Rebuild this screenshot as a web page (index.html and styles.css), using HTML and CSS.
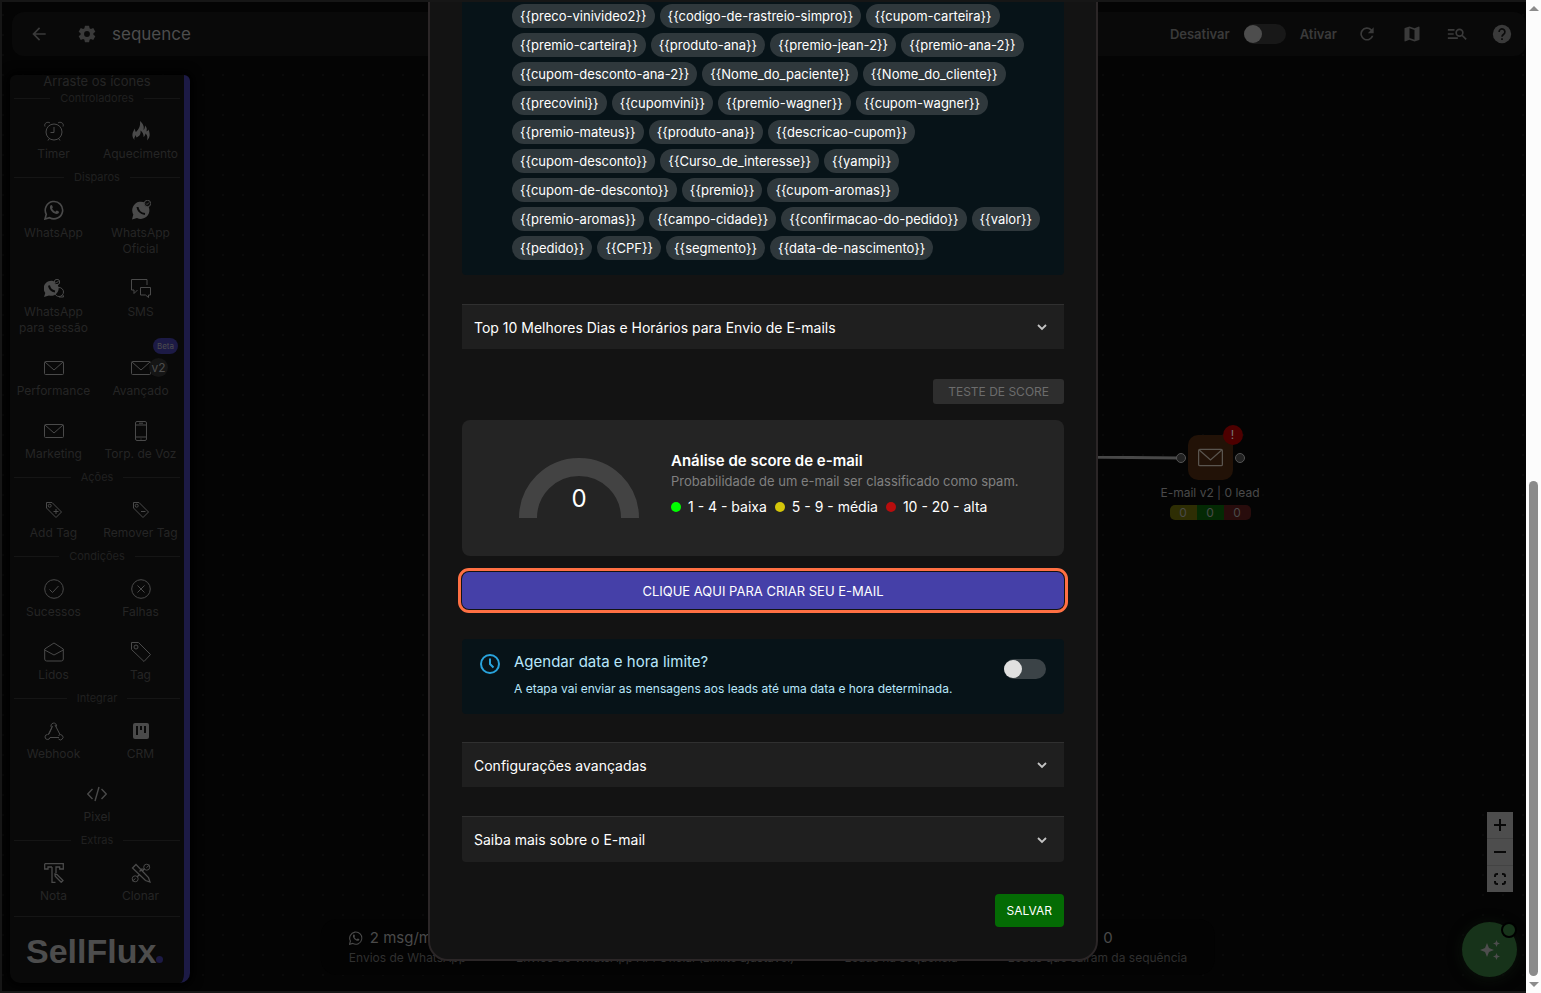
FILE: index.html
```html
<!DOCTYPE html>
<html lang="pt-BR">

<head>
    <meta charset="UTF-8">
    <meta name="viewport" content="width=device-width, initial-scale=1.0">
    <title>sequence - SellFlux</title>
    <link rel="stylesheet" href="styles.css">
</head>

<body>
    <svg class="sprite" aria-hidden="true">
        <symbol id="mail" viewBox="0 0 20 20"><rect x="0.5" y="3.5" width="19" height="13" rx="1"/><path d="M1 4l9 8 9-8"/></symbol>
        <symbol id="whats" viewBox="0 0 20 20"><path d="M1 19l1.300-4.700A8.700 8.700 0 1 1 5.600 17.700z" stroke-width="1.600"/><path d="M6.400 5.500c.6-.8 1.400-.7 1.700 0l.7 1.600c.2.500-.8 1.300-.6 1.700.8 1.500 1.800 2.300 3.200 2.900.5.100 1-1.300 1.500-1.100l1.800.9c.6.400.2 1.500-.5 2-1.600 1.200-4.400-.1-6.100-1.800C6.300 9.800 5.200 7.400 6.400 5.500z" class="fill"/></symbol>
        <symbol id="chevron" viewBox="0 0 12 12"><path d="M2 4l4 4 4-4" stroke-width="1.800"/></symbol>
    </svg>

    <div class="page">
        <main class="workspace">
            <header class="topbar">
                <button class="icon-btn" aria-label="Voltar"><svg viewBox="0 0 24 24"><path class="fill" d="M20 11H7.800l5.600-5.600L12 4l-8 8 8 8 1.400-1.400L7.800 13H20z"/></svg></button>
                <button class="icon-btn gear" aria-label="Configurações"><svg viewBox="0 0 24 24"><path class="fill" fill-rule="evenodd" d="M9.500 2h5l.6 3 1.500.9 2.900-1 2.500 4.300-2.300 2v1.600l2.300 2-2.500 4.300-2.900-1-1.500.9-.6 3h-5l-.6-3-1.500-.9-2.900 1L2 14.800l2.300-2v-1.600L2 9.200l2.500-4.300 2.900 1L8.900 5zM12 8.500a3.500 3.500 0 1 0 0 7 3.500 3.500 0 0 0 0-7z"/></svg></button>
                <h1>sequence</h1>
                <div class="topbar-right">
                    <label for="active">Desativar</label>
                    <input type="checkbox" class="switch" id="active">
                    <label for="active">Ativar</label>
                    <button class="icon-btn" aria-label="Atualizar"><svg viewBox="0 0 24 24"><path class="fill" d="M17.700 6.300A8 8 0 1 0 19.700 14h-2.100A6 6 0 1 1 16.200 7.800L13 11h7V4z"/></svg></button>
                    <button class="icon-btn" aria-label="Mapa"><svg viewBox="0 0 24 24"><path class="fill" fill-rule="evenodd" d="M20.500 3l-.2.100L15 5.100 9 3 3.400 4.900a.5.500 0 0 0-.4.500v15.100c0 .3.200.5.500.5l5.500-2.100 6 2.100 5.600-1.900c.2-.1.400-.3.400-.5V3.500a.5.500 0 0 0-.5-.5zM15 19l-6-2.100V5l6 2.100z"/></svg></button>
                    <button class="icon-btn" aria-label="Buscar"><svg viewBox="0 0 24 24"><path class="fill" d="M1 6h8v2H1zm0 5h7v2H1zm0 5h12v2H1z"/><circle cx="15" cy="10.500" r="4" stroke-width="2"/><path d="M18 13.500l5 5" stroke-width="2"/></svg></button>
                    <button class="icon-btn" aria-label="Ajuda"><svg viewBox="0 0 24 24"><circle cx="12" cy="12" r="11" class="fill"/><path class="dark" d="M8.500 9.500a3.500 3.500 0 1 1 5.500 2.800c-1.300.9-2 1.500-2 3M12 17v2.200"/></svg></button>
                </div>
            </header>

            <aside class="sidebar">
                <div class="sidebar-list">
                    <p class="hint">Arraste os ícones</p>
                    <h2 class="group">Controladores</h2>
                    <div class="tools">
                        <div class="tool"><svg viewBox="0 0 20 20"><circle cx="10" cy="11" r="8"/><path d="M10 6v5.500H6.500M1 5.500C-.5 2 4 .2 6 2M19 5.500C20.500 2 16 .2 14 2M5 18l-1 1.500M15 18l1 1.500"/></svg>Timer</div>
                        <div class="tool"><svg viewBox="0 0 20 20"><path class="fill" d="M3.500 19C0 15 1.500 11 4 7.500c0 2 .3 3 1 3.500C8 8 9.500 5 9 0c3 3 4.500 5 3.500 9 1-1 1.500-2.500 1.500-4.500 2 2 2 3.500 1.500 6 1-.5 1.500-1 2-2 2 5 1.500 8-1.500 11 1-4 0-5.500-1.500-7-.3 2-1 3-2 3.500.3-3-1-5-3-6.500.5 4-1 5.500-4 7-.5-1-.7-1.500-.7-2.500-1.300 2-1.800 3.500-1.300 5z"/></svg>Aquecimento</div>
                    </div>
                    <h2 class="group">Disparos</h2>
                    <div class="tools">
                        <div class="tool"><svg><use href="#whats"/></svg>WhatsApp</div>
                        <div class="tool"><svg viewBox="0 0 20 20"><path class="fill" d="M1 19.500l1.300-5A8.600 8.600 0 1 1 6 18z"/><path class="dark" d="M6.500 7c.5 4 3 6.500 7.500 7"/><circle cx="16.500" cy="3.500" r="3.200" class="badge-dot"/><path d="M15 3.500l1 1L18 2.500"/></svg>WhatsApp Oficial</div>
                        <div class="tool"><svg viewBox="0 0 20 20"><circle cx="15" cy="13" r="4.500"/><path class="fill" d="M0 18l1.300-4A7.500 7.500 0 1 1 5 16.500z"/><path class="dark" d="M5 6.500c.5 3.500 2.500 5.500 6 6"/><circle cx="13" cy="3" r="2.700" class="badge-dot"/><path d="M11.500 3l1 1 2-2M15 18h4.500l-.5-2"/></svg>WhatsApp para sessão</div>
                        <div class="tool"><svg viewBox="0 0 20 20"><path d="M16 6V.5H.5V11H3v3.500L6.500 11M9.500 8.500h10V16h-2v2.500L14.500 16h-5z"/></svg>SMS</div>
                        <div class="tool"><svg><use href="#mail"/></svg>Performance</div>
                        <div class="tool"><svg><use href="#mail"/></svg>Avançado<span class="v2">v2</span><span class="beta">Beta</span></div>
                        <div class="tool"><svg><use href="#mail"/></svg>Marketing</div>
                        <div class="tool"><svg viewBox="0 0 20 20"><rect x="4.500" y=".5" width="11" height="19" rx="1.500"/><path d="M4.500 4h11M4.500 16h11M8 2.200h4M9.500 18h1"/></svg>Torp. de Voz</div>
                    </div>
                    <h2 class="group">Ações</h2>
                    <div class="tools">
                        <div class="tool"><svg viewBox="0 0 20 20"><path d="M2.500 2.500h5.500l9.500 9.500-5.500 5.500L2.500 8zM9.500 11.500h5M12 9v5"/><circle cx="5.700" cy="5.700" r="1.500"/></svg>Add Tag</div>
                        <div class="tool"><svg viewBox="0 0 20 20"><path d="M2.500 2.500h5.500l9.500 9.500-5.500 5.500L2.500 8zM10 11.500h4.500"/><circle cx="5.700" cy="5.700" r="1.500"/></svg>Remover Tag</div>
                    </div>
                    <h2 class="group">Condições</h2>
                    <div class="tools">
                        <div class="tool"><svg viewBox="0 0 20 20"><circle cx="10" cy="10" r="9.300"/><path d="M5.500 10.500l3 3 6-6.500"/></svg>Sucessos</div>
                        <div class="tool"><svg viewBox="0 0 20 20"><circle cx="10" cy="10" r="9.300"/><path d="M6.500 6.500l7 7M13.500 6.500l-7 7"/></svg>Falhas</div>
                        <div class="tool"><svg viewBox="0 0 20 20"><path d="M.7 7L10 1l9.300 6v10q0 2-2 2H2.700q-2 0-2-2zM.7 8l9.300 5 9.300-5"/></svg>Lidos</div>
                        <div class="tool"><svg viewBox="0 0 20 20"><path d="M.5.500h7l12 12-6.500 7L.5 7.500z"/><circle cx="5" cy="5" r="2"/></svg>Tag</div>
                    </div>
                    <h2 class="group">Integrar</h2>
                    <div class="tools">
                        <div class="tool"><svg viewBox="0 0 20 20"><path d="M7.500 6.500a2.800 2.800 0 1 1 5-1M8.500 5L4 14M11 4l5 9.500M3.500 13.500a2.500 2.500 0 1 0 2.500 3h9M14.500 14.500a2.600 2.600 0 1 1 0 3.500M8 6.500L5 13"/></svg>Webhook</div>
                        <div class="tool"><svg viewBox="0 0 20 20"><rect x="2" y="2" width="16" height="16" rx="2" class="fill"/><path class="dark" d="M6 5v9M10 5v4M14 5v7"/></svg>CRM</div>
                        <div class="tool wide"><svg viewBox="0 0 20 20"><path d="M5.500 5L.7 10l4.800 5M14.500 5l4.800 5-4.800 5M12 3L8 17" stroke-width="1.400"/></svg>Pixel</div>
                    </div>
                    <h2 class="group">Extras</h2>
                    <div class="tools">
                        <div class="tool"><svg viewBox="0 0 20 20"><path d="M.7.700h18.600V6h-3.600V4H12v6M8 4H4v2H.7V.7M8 4v15.300h3.500M11 11l2 .5 6 6-1.800 1.800-6-6z" stroke-width="1.300"/></svg>Nota</div>
                        <div class="tool"><svg viewBox="0 0 20 20"><path d="M1.500 5L5 1.500l12.500 13 1.500 4.500-4.500-1.500zM8.500 8.500l3-3M11.500 8l2-2.500M8 12l-2 2" stroke-width="1.300"/><circle cx="15.700" cy="4.200" r="3"/><circle cx="4.200" cy="15.800" r="3"/><path d="M15.500 4.500L18.500 2M4.500 15.500l-3 2.500"/></svg>Clonar</div>
                    </div>
                    <div class="brand">SellFlux<i></i></div>
                </div>
            </aside>

            <section class="canvas">
                <svg class="edge" viewBox="0 0 100 4" preserveAspectRatio="none"><path d="M0 1L100 2" stroke-width="3"/></svg>
                <div class="node">
                    <div class="node-box"><svg><use href="#mail"/></svg><span class="alert">!</span></div>
                    <p>E-mail v2 | 0 lead</p>
                    <div class="counts"><span>0</span><span>0</span><span>0</span></div>
                </div>
            </section>

            <footer class="stats">
                <div class="stat"><b><svg><use href="#whats"/></svg>2 msg/min</b><span>Envios de WhatsApp</span></div>
                <div class="stat"><b><svg><use href="#whats"/></svg>0</b><span>Envios de WhatsApp API Oficial (Limite ajustável)</span></div>
                <div class="stat"><b><svg><use href="#mail"/></svg>0</b><span>Leads na sequência</span></div>
                <div class="stat"><b><svg><use href="#mail"/></svg>0</b><span>Leads que saíram da sequência</span></div>
            </footer>

            <div class="zoom">
                <button aria-label="Aumentar"><svg viewBox="0 0 12 12"><path d="M6 0v12M0 6h12"/></svg></button>
                <button aria-label="Diminuir"><svg viewBox="0 0 12 12"><path d="M0 6h12"/></svg></button>
                <button aria-label="Ajustar"><svg viewBox="0 0 12 12"><path d="M1 4V3q0-2 2-2h1M8 1h1q2 0 2 2v1M11 8v1q0 2-2 2H8M4 11H3q-2 0-2-2V8"/></svg></button>
            </div>
            <button class="assistant" aria-label="Assistente">
                <svg viewBox="0 0 24 24"><path class="fill" d="M9 5l2 5 5 2-5 2-2 5-2-5-5-2 5-2zM18.500 2l1 2.500 2.500 1-2.500 1-1 2.500-1-2.500-2.500-1 2.500-1zM18.500 15l1 2.500 2.500 1-2.500 1-1 2.500-1-2.500-2.500-1 2.500-1z"/></svg>
                <span></span>
            </button>

            <div class="overlay">
                <div class="modal" role="dialog" aria-label="E-mail">
                    <div class="variables">
                        <span>{{preco-vinivideo2}}</span><span>{{codigo-de-rastreio-simpro}}</span><span>{{cupom-carteira}}</span><br>
                        <span>{{premio-carteira}}</span><span>{{produto-ana}}</span><span>{{premio-jean-2}}</span><span>{{premio-ana-2}}</span><br>
                        <span>{{cupom-desconto-ana-2}}</span><span>{{Nome_do_paciente}}</span><span>{{Nome_do_cliente}}</span><br>
                        <span>{{precovini}}</span><span>{{cupomvini}}</span><span>{{premio-wagner}}</span><span>{{cupom-wagner}}</span><br>
                        <span>{{premio-mateus}}</span><span>{{produto-ana}}</span><span>{{descricao-cupom}}</span><br>
                        <span>{{cupom-desconto}}</span><span>{{Curso_de_interesse}}</span><span>{{yampi}}</span><br>
                        <span>{{cupom-de-desconto}}</span><span>{{premio}}</span><span>{{cupom-aromas}}</span><br>
                        <span>{{premio-aromas}}</span><span>{{campo-cidade}}</span><span>{{confirmacao-do-pedido}}</span><span>{{valor}}</span><br>
                        <span>{{pedido}}</span><span>{{CPF}}</span><span>{{segmento}}</span><span>{{data-de-nascimento}}</span>
                    </div>

                    <button class="accordion">Top 10 Melhores Dias e Horários para Envio de E-mails<svg><use href="#chevron"/></svg></button>

                    <button class="score-test" disabled>TESTE DE SCORE</button>

                    <div class="score">
                        <div class="gauge">
                            <svg viewBox="0 0 120 60"><path d="M9 60a51 51 0 0 1 102 0"/></svg>
                            <span>0</span>
                        </div>
                        <div class="score-info">
                            <h3>Análise de score de e-mail</h3>
                            <p>Probabilidade de um e-mail ser classificado como spam.</p>
                            <ul>
                                <li class="low">1 - 4 - baixa</li>
                                <li class="medium">5 - 9 - média</li>
                                <li class="high">10 - 20 - alta</li>
                            </ul>
                        </div>
                    </div>

                    <button class="create">CLIQUE AQUI PARA CRIAR SEU E-MAIL</button>

                    <div class="schedule">
                        <svg viewBox="0 0 22 22"><circle cx="11" cy="11" r="9"/><path d="M11 5.500V11l3.500 3.500"/></svg>
                        <div class="schedule-text">
                            <label for="limit">Agendar data e hora limite?</label>
                            <p>A etapa vai enviar as mensagens aos leads até uma data e hora determinada.</p>
                        </div>
                        <input type="checkbox" class="switch" id="limit">
                    </div>

                    <button class="accordion">Configurações avançadas<svg><use href="#chevron"/></svg></button>
                    <button class="accordion last">Saiba mais sobre o E-mail<svg><use href="#chevron"/></svg></button>

                    <button class="save">SALVAR</button>
                </div>
            </div>
        </main>

        <div class="scrollbar"><i class="up"></i><div class="thumb"></div><i class="down"></i></div>
    </div>
</body>

</html>
```
FILE: styles.css
```css
* {
    margin: 0;
    padding: 0;
    box-sizing: border-box;
}

body {
    font-family: Inter, "Liberation Sans", sans-serif;
    background-color: #050505;
    color: #fff;
    overflow: hidden;
}

button {
    font-family: inherit;
    border: none;
    background: none;
    color: inherit;
}

svg {
    display: block;
    flex: none;
    fill: none;
    stroke: currentColor;
}

.fill {
    fill: currentColor;
    stroke: none;
}

.dark {
    stroke: #0a0a0a;
    stroke-width: 2;
}

.sprite {
    position: absolute;
    width: 0;
    height: 0;
}

.page {
    display: grid;
    grid-template-columns: minmax(0, 1fr) 15px;
    height: 100vh;
}

.workspace {
    position: relative;
    display: grid;
    grid-template-columns: 180px minmax(0, 1fr);
    grid-template-rows: 44px minmax(0, 1fr);
    gap: 19px 0;
    padding: 10px 0 8px 8px;
    border: 2px solid #161616;
    border-right: none;
    overflow: hidden;
    background: radial-gradient(circle, #0a0a0a 1px, transparent 1px) -9px 3px / 20px 20px #040404;
}

/* top bar */
.topbar {
    grid-column: 1 / 3;
    display: flex;
    align-items: center;
    margin-left: 2px;
    padding: 0 14px 0 17px;
    border-radius: 12px;
    background-color: #090909;
    color: #3a3a3a;

    h1 {
        margin-left: 15px;
        font-size: 17px;
        font-weight: 400;
        color: #4d4d4d;
    }
}

.icon-btn svg {
    width: 20px;
    height: 20px;
}

.icon-btn.gear {
    margin-left: 28px;
}

.topbar-right {
    display: flex;
    align-items: center;
    margin-left: auto;
    font-size: 13px;
    font-weight: 600;

    .switch {
        margin: 0 14px;
    }

    .icon-btn {
        margin-left: 25px;
    }

    label + .icon-btn {
        margin-left: 20px;
    }
}

.switch {
    appearance: none;
    display: flex;
    flex: none;
    width: 42px;
    height: 20px;
    border-radius: 10px;
    background-color: #181818;
}

.switch::before {
    content: "";
    width: 18px;
    height: 18px;
    margin: 1px 0;
    border-radius: 50%;
    background-color: #4d4d4d;
}

/* tools */
.sidebar {
    display: flex;
    flex-direction: column;
    justify-content: flex-end;
    border-right: 6px solid #1c1a45;
    border-radius: 6px 6px 10px 10px;
    overflow: hidden;
    background-color: #090909;
    box-shadow: 0 0 10px 4px #000;
    color: #252525;
    font-size: 12px;
    line-height: 16px;
    text-align: center;
}

.hint {
    margin-bottom: 4px;
    font-size: 13px;
    line-height: 10px;
}

.group {
    display: flex;
    align-items: center;
    gap: 10px;
    padding: 0 4px;
    font-size: 11px;
    font-weight: 400;
    line-height: 16px;
    color: #202020;
}

.group::before,
.group::after {
    content: "";
    flex: 1;
    height: 1px;
    background-color: #151515;
}

.tools {
    display: grid;
    grid-template-columns: 1fr 1fr;
}

.tool {
    position: relative;
    padding: 15px 2px 7px;

    svg {
        width: 20px;
        height: 20px;
        margin: 0 auto 5px;
        color: #4a4a4a;
    }
}

.tool.wide {
    grid-column: 1 / 3;
}

.badge-dot {
    fill: #0a0a0a;
}

.v2 {
    position: absolute;
    left: 52px;
    top: 15px;
    width: 19px;
    line-height: 19px;
    border-radius: 50%;
    background-color: #151515;
    color: #4d4d4d;
}

.beta {
    position: absolute;
    right: 6px;
    top: -5px;
    padding: 0 4px;
    border-radius: 8px;
    background-color: #1c1a45;
    color: #4d4d4d;
    font-size: 8px;
}

.brand {
    display: flex;
    align-items: baseline;
    margin: 5px 4px 0;
    padding: 14px 0 12px 12px;
    border-top: 1px solid #151515;
    color: #4d4d4d;
    font-family: "Liberation Sans", Arial, sans-serif;
    font-size: 34px;
    font-weight: 700;
    line-height: 40px;

    i {
        width: 7px;
        height: 7px;
        border-radius: 50%;
        background-color: #1c1a45;
    }
}

/* flow canvas */
.canvas {
    position: relative;
}

.edge {
    position: absolute;
    right: 346px;
    top: 381px;
    width: 100px;
    height: 4px;
    color: #484848;
}

.node {
    position: absolute;
    right: 260px;
    top: 360px;
    width: 112px;
    color: #4a4a4a;
    font-size: 12px;
    text-align: center;

    p {
        margin: 5px 0;
        line-height: 15px;
    }
}

.node-box {
    position: relative;
    width: 45px;
    height: 45px;
    margin: 0 auto;
    padding: 10px;
    border-radius: 10px;
    background-color: #221207;
    color: #5a554f;

    svg {
        width: 25px;
        height: 25px;
    }
}

.node-box::before,
.node-box::after {
    content: "";
    position: absolute;
    top: 18px;
    left: -12px;
    width: 8px;
    height: 8px;
    border: 1px solid #555;
    border-radius: 50%;
    background-color: #222;
}

.node-box::after {
    left: 47px;
}

.alert {
    position: absolute;
    right: -10px;
    top: -10px;
    width: 20px;
    border-radius: 50%;
    background-color: #4d0000;
    color: #777;
    line-height: 20px;
}

.counts {
    display: flex;
    width: 81px;
    margin: 0 auto;
    border-radius: 5px;
    overflow: hidden;
    line-height: 15px;

    span {
        flex: 1;
        background-color: #2e2e04;
    }

    span:nth-child(2) {
        background-color: #042a04;
    }

    span:nth-child(3) {
        background-color: #280c0c;
    }
}

.stats {
    position: absolute;
    left: 50%;
    bottom: 16px;
    display: flex;
    gap: 50px;
    padding: 8px 28px;
    border-radius: 16px;
    background-color: #030303;
    transform: translateX(-50%);
    margin-left: 4px;
    color: #303030;
    font-size: 12px;
    white-space: nowrap;
}

.stat {
    display: flex;
    flex-direction: column;
    align-items: center;
    line-height: 18px;

    b {
        display: flex;
        align-items: center;
        gap: 7px;
        color: #4a4a4a;
        font-size: 15px;
        font-weight: 400;
        line-height: 22px;
    }

    svg {
        width: 14px;
        height: 14px;
    }
}

.stat:first-child {
    align-items: flex-start;
}

.zoom {
    position: absolute;
    right: 13px;
    bottom: 99px;
    display: flex;
    flex-direction: column;
    gap: 1px;
    background-color: #434343;
    color: #080808;

    button {
        display: flex;
        align-items: center;
        justify-content: center;
        width: 26px;
        height: 26px;
        background-color: #4d4d4d;
    }

    svg {
        width: 12px;
        height: 12px;
        stroke-width: 2;
    }
}

.assistant {
    position: absolute;
    right: 9px;
    bottom: 14px;
    display: flex;
    align-items: center;
    justify-content: center;
    width: 55px;
    height: 55px;
    border-radius: 50%;
    background-color: #17331a;
    box-shadow: 0 2px 14px #0a120a;
    color: #4d4d4d;

    svg {
        width: 24px;
        height: 24px;
    }

    span {
        position: absolute;
        right: 0;
        top: 0;
        width: 16px;
        height: 16px;
        border: 2px solid #000;
        border-radius: 50%;
        background-color: #17331a;
    }
}

/* modal, scrolled to its end */
.overlay {
    position: absolute;
    inset: 0;
    display: flex;
    justify-content: center;
    align-items: flex-end;
    padding: 0 2px 30px 0;
    pointer-events: none;
}

.modal {
    display: flex;
    flex-direction: column;
    width: 670px;
    padding: 0 32px 32px;
    border: 2px solid #2b2627;
    border-radius: 20px;
    background-color: #131313;
    pointer-events: auto;
}

.variables {
    margin-bottom: 29px;
    padding: 20px 0 15px 50px;
    border-radius: 4px;
    background-color: #071318;
    font-size: 13px;
    line-height: 29px;
    white-space: nowrap;

    span {
        display: inline-block;
        height: 24px;
        margin-right: 5px;
        padding: 0 8px;
        border-radius: 12px;
        background-color: #2f383c;
        line-height: 24px;
        vertical-align: bottom;
    }
}

.accordion {
    display: flex;
    justify-content: space-between;
    align-items: center;
    height: 45px;
    margin-bottom: 29px;
    padding: 0 16px 0 12px;
    border-top: 1px solid #303030;
    background-color: #1f1f1f;
    font-size: 14px;

    svg {
        width: 12px;
        height: 12px;
        color: #c4c4c4;
    }
}

.accordion.last {
    height: 46px;
    margin-bottom: 32px;
    border-radius: 0 0 4px 4px;
}

.score-test {
    align-self: flex-end;
    height: 25px;
    margin: 1px 0 16px;
    padding: 0 15px;
    border-radius: 3px;
    background-color: #2e2e2e;
    color: #6c6c6c;
    font-size: 12px;
}

.score {
    display: flex;
    align-items: center;
    gap: 32px;
    height: 136px;
    margin-bottom: 16px;
    padding-left: 57px;
    border-radius: 8px;
    background-color: #242424;
}

.gauge {
    position: relative;
    color: #434343;

    svg {
        width: 120px;
        height: 60px;
        stroke-width: 18;
    }

    span {
        position: absolute;
        left: 0;
        right: 0;
        bottom: 4px;
        color: #fff;
        font-size: 24px;
        line-height: 30px;
        text-align: center;
    }
}

.score-info {
    margin-bottom: 4px;

    h3 {
        font-size: 15px;
        font-weight: 600;
        line-height: 20px;
    }

    p {
        color: #808080;
        font-size: 13px;
        line-height: 20px;
    }

    ul {
        display: flex;
        gap: 8px;
        margin-top: 2px;
        list-style: none;
        font-size: 14px;
        line-height: 28px;
    }

    li {
        display: flex;
        align-items: center;
        gap: 7px;
    }

    li::before {
        content: "";
        width: 10px;
        height: 10px;
        border-radius: 50%;
        background-color: #00ff00;
    }

    .medium::before {
        background-color: #d4c60a;
    }

    .high::before {
        background-color: #b80d0d;
    }
}

.create {
    height: 37px;
    margin-bottom: 30px;
    border-radius: 7px;
    outline: 3px solid #ff7043;
    outline-offset: 1px;
    background-color: #4540a8;
    font-size: 13px;
}

.schedule {
    display: flex;
    align-items: flex-start;
    margin-bottom: 28px;
    padding: 12px 18px 14px 17px;
    border-radius: 4px;
    background-color: #071318;
    color: #b8e7fb;

    svg {
        width: 22px;
        height: 22px;
        margin: 2px 13px 0 0;
        color: #29a3dc;
        stroke-width: 2;
    }

    label {
        display: block;
        font-size: 15px;
        line-height: 22px;
    }

    p {
        margin-top: 5px;
        font-size: 12px;
        line-height: 22px;
    }

    .switch {
        margin: 8px 0 0 auto;
        background-color: #3b4347;
    }

    .switch::before {
        background-color: #e0e0e0;
    }
}

.save {
    align-self: flex-end;
    height: 33px;
    padding: 0 12px;
    border-radius: 4px;
    background-color: #046b04;
    font-size: 12px;
}

/* page scrollbar */
.scrollbar {
    display: flex;
    flex-direction: column;
    align-items: center;
    justify-content: space-between;
    padding: 6px 0;
    background-color: #fcfcfc;

    .up,
    .down {
        border: 5px solid transparent;
        border-top: none;
        border-bottom: 5px solid #8b8b8b;
    }

    .down {
        border-bottom: none;
        border-top: 5px solid #8b8b8b;
    }

    .thumb {
        width: 9px;
        height: 50%;
        min-height: 495px;
        margin: auto 0 6px;
        border-radius: 5px;
        background-color: #8b8b8b;
    }
}
```
